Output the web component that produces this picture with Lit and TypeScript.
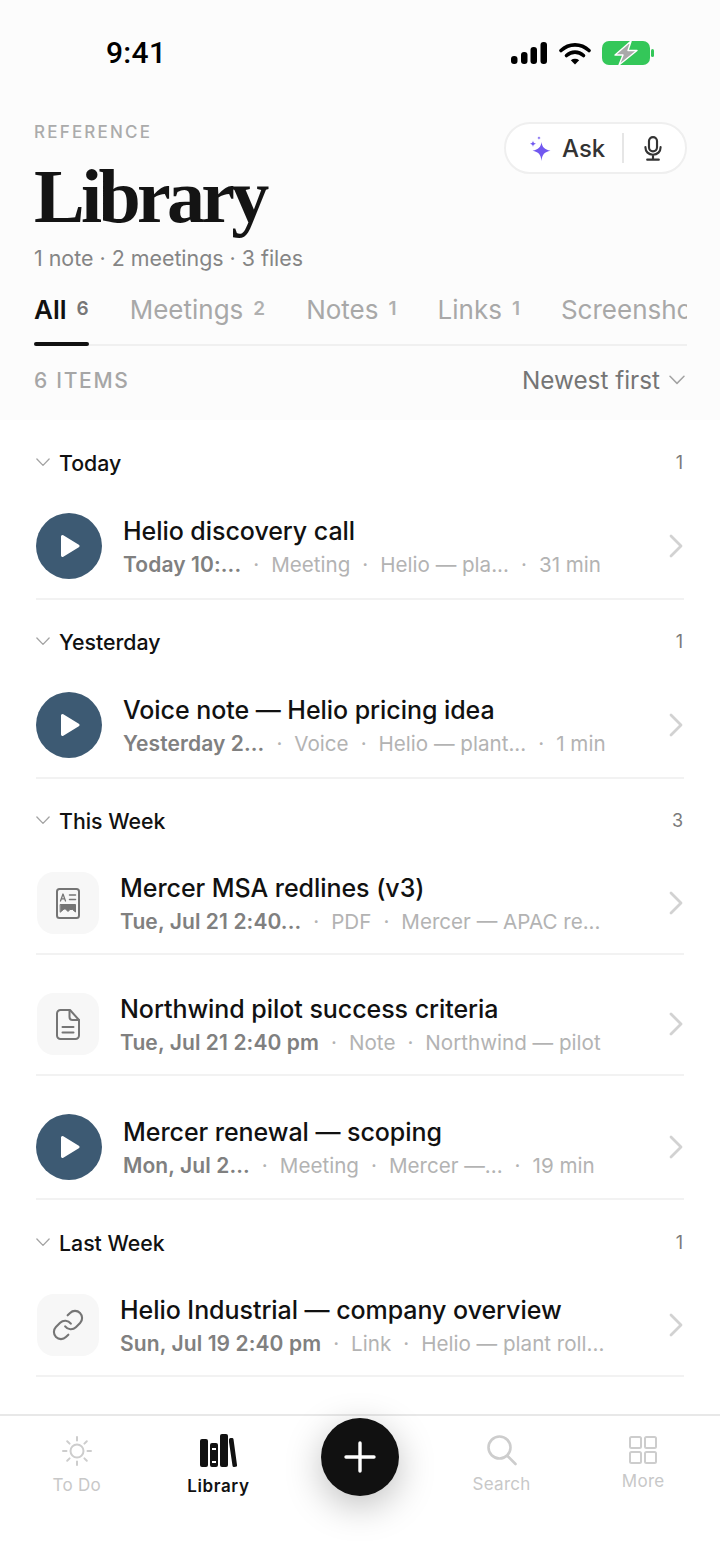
import { LitElement, html, css, svg } from "lit";
import { customElement } from "lit/decorators.js";

type Kind = "play" | "pdf" | "note" | "link";
interface Row { kind: Kind; title: string; date: string; meta: string[]; }
interface Group { name: string; count: number; rows: Row[]; tall?: boolean; }

const groups: Group[] = [
  { name: "Today", count: 1, tall: true, rows: [
    { kind: "play", title: "Helio discovery call", date: "Today 10:...", meta: ["Meeting", "Helio — pla...", "31 min"] },
  ]},
  { name: "Yesterday", count: 1, rows: [
    { kind: "play", title: "Voice note — Helio pricing idea", date: "Yesterday 2...", meta: ["Voice", "Helio — plant...", "1 min"] },
  ]},
  { name: "This Week", count: 3, rows: [
    { kind: "pdf", title: "Mercer MSA redlines (v3)", date: "Tue, Jul 21 2:40...", meta: ["PDF", "Mercer — APAC re..."] },
    { kind: "note", title: "Northwind pilot success criteria", date: "Tue, Jul 21 2:40 pm", meta: ["Note", "Northwind — pilot"] },
    { kind: "play", title: "Mercer renewal — scoping", date: "Mon, Jul 2...", meta: ["Meeting", "Mercer —...", "19 min"] },
  ]},
  { name: "Last Week", count: 1, tall: true, rows: [
    { kind: "link", title: "Helio Industrial — company overview", date: "Sun, Jul 19 2:40 pm", meta: ["Link", "Helio — plant roll..."] },
  ]},
];

const tabs = [["All", "6"], ["Meetings", "2"], ["Notes", "1"], ["Links", "1"], ["Screenshots", "1"]];

const chevDown = (w: number) => html`<svg width=${w} height=${w * 0.6} viewBox="0 0 16 9.6" fill="none" stroke="#a3a3a3" stroke-width="1.5" stroke-linecap="round" stroke-linejoin="round"><path d="M1 1.2 8 8.4l7-7.2"/></svg>`;

const fileIcon = (kind: Kind) => {
  if (kind === "pdf") {
    return html`<svg width="24" height="31" viewBox="0 0 24 31" fill="none" stroke="#757575" stroke-width="2" stroke-linecap="round" stroke-linejoin="round">${svg`<rect x="1" y="1" width="22" height="29" rx="2.500"/><path d="M13.500 7h6M13.500 11.500h6" stroke-width="1.500"/><path d="M4.500 13 7 6l2.500 7M5.500 10.800h3" stroke-width="1.300"/><path d="M4.500 16.500h15V24l-3-2.500h-2.500l-2 2-2.500-2.500H8L4.500 24z" fill="#757575" stroke-width="1"/>`}</svg>`;
  }
  if (kind === "note") {
    return html`<svg width="24" height="31" viewBox="0 0 24 31" fill="none" stroke="#757575" stroke-width="2" stroke-linecap="round" stroke-linejoin="round">${svg`<path d="M4.500 1h9.500L23 11v15.500a3.500 3.500 0 0 1-3.500 3.500h-15A3.500 3.500 0 0 1 1 26.500v-22A3.500 3.500 0 0 1 4.500 1z"/><path d="M13.500 1.200V8a3 3 0 0 0 3 3H23"/><path d="M6.500 18h11M6.500 23.500h11"/>`}</svg>`;
  }
  return html`<svg width="34" height="34" viewBox="0 0 24 24" fill="none" stroke="#757575" stroke-width="1.500" stroke-linecap="round" stroke-linejoin="round">${svg`<path d="M10 13a5 5 0 0 0 7.540.540l3-3a5 5 0 0 0-7.070-7.070l-1.720 1.710"/><path d="M14 11a5 5 0 0 0-7.540-.540l-3 3a5 5 0 0 0 7.070 7.070l1.710-1.710"/>`}</svg>`;
};

@customElement("app-root")
export class AppRoot extends LitElement {
  static styles = css`
    :host { display: block; width: 720px; height: 1564px; position: relative; overflow: hidden; background: #fff;
      font-family: Inter, "Liberation Sans", sans-serif; color: #111; }
    .page { height: 1564px; display: flex; flex-direction: column; }
    .top { background: #fcfcfc; height: 420px; flex: none; display: flex; flex-direction: column; }
    .status { height: 122px; flex: none; display: flex; justify-content: space-between; padding: 36px 66px 0 106px; box-sizing: border-box; }
    .time { font-size: 30px; line-height: 34px; font-weight: 500; color: #000; font-family: Roboto, Inter, sans-serif; letter-spacing: .3px; }
    .sys { display: flex; align-items: center; height: 34px; gap: 12px; }
    .head { display: flex; justify-content: space-between; padding: 0 33px 0 34px; }
    .eyebrow { font-size: 17px; line-height: 20px; letter-spacing: 2.200px; color: #ababab; font-weight: 500; }
    h1 { margin: 11px 0 0; font-family: "Liberation Serif", serif; font-size: 76px; line-height: 86px; font-weight: 700; letter-spacing: -3.700px; color: #141414; }
    .sub { font-size: 21.400px; line-height: 26px; color: #858585; margin-top: 6px; }
    .pill { width: 183px; height: 52px; box-sizing: border-box; border: 2px solid #efefef; border-radius: 26px; background: #fff; display: flex; align-items: center; padding-left: 23px; }
    .ask { font-size: 24px; font-weight: 500; color: #333; margin-left: 11px; }
    .pdiv { width: 2px; height: 30px; background: #e6e6e6; margin: 0 20px 0 17px; }
    .tabs { margin: 19px 33px 0 34px; height: 56px; display: flex; gap: 41px; overflow: hidden; box-shadow: inset 0 -2px 0 #f0f0f0; flex: none; }
    .tab { flex: none; display: flex; gap: 10px; height: 56px; box-sizing: border-box; padding-top: 4px; font-size: 26px; line-height: 32px; color: #a8a8a8; font-weight: 400; position: relative; }
    .tab b { font-size: 19px; font-weight: 600; color: #b0b0b0; line-height: 30px; }
    .tab.on { color: #111; font-weight: 600; }
    .tab.on b { color: #777; }
    .tab.on::after { content: ""; position: absolute; left: 0; right: 0; bottom: 0; height: 4px; border-radius: 2px; background: #111; }
    .sort { display: flex; justify-content: space-between; align-items: center; padding: 0 35px 0 34px; margin-top: 17px; height: 34px; }
    .items { font-size: 21px; letter-spacing: 1.700px; color: #a6a6a6; font-weight: 500; }
    .newest { font-size: 24.300px; color: #757575; display: flex; align-items: center; gap: 9px; }
    .list { padding: 0 36px; flex: 1; }
    .ghead { height: 55px; box-sizing: border-box; padding-top: 28px; display: flex; align-items: center; }
    .ghead.tall { height: 56px; padding-top: 29px; }
    .ghead span.n { font-size: 21.300px; font-weight: 530; line-height: 26px; margin-left: 9px; color: #111; height: 26px; flex: 1; }
    .ghead span.c { font-size: 18px; color: #7a7a7a; line-height: 26px; margin-right: 1px; }
    .chev { display: flex; height: 26px; align-items: center; }
    .row { display: flex; align-items: center; border-bottom: 2px solid #f2f2f2; box-sizing: border-box; height: 124px; padding-top: 20px; }
    .ghead + .row { padding-top: 18px; }
    .ghead + .row.file, .row.file { height: 121px; padding-top: 19px; }
    .play { width: 66px; height: 66px; border-radius: 50%; background: #3d5a73; flex: none; display: flex; align-items: center; justify-content: center; margin-right: 21px; }
    .ficon { width: 62px; height: 62px; border-radius: 17px; background: #f7f7f7; flex: none; display: flex; align-items: center; justify-content: center; margin: 0 21px 0 1px; }
    .text { flex: 1; min-width: 0; margin-top: 4px; }
    .title { font-size: 25px; line-height: 32px; font-weight: 530; color: #111; white-space: nowrap; letter-spacing: -.05px; }
    .meta { display: flex; font-size: 20.600px; line-height: 34px; margin-top: 1px; color: #b3b3b3; white-space: nowrap; gap: 12px; }
    .meta strong { font-size: 21px; font-weight: 600; color: #808080; letter-spacing: .1px; }
    .rchev { flex: none; margin-right: 1px; }
    .bar { height: 150px; flex: none; border-top: 2px solid #e8e8e8; box-sizing: border-box; display: grid; grid-template-columns: repeat(5, 1fr); padding: 18px 6px 0; background: #fff; }
    .ti { display: flex; flex-direction: column; align-items: center; color: #c8c8c8; font-size: 17px; line-height: 22px; letter-spacing: .3px; }
    .ti svg { display: block; }
    .ti.on { color: #111; font-weight: 600; letter-spacing: .6px; }
    .lab { margin-top: 7px; }
    .lab.s { margin-top: 6px; }
    .gap { margin-top: 2px; }
    .fab { position: absolute; left: 321px; top: 1418px; width: 78px; height: 78px; border-radius: 50%; background: #111; box-shadow: 0 10px 36px rgba(0,0,0,.25); display: flex; align-items: center; justify-content: center; }
  `;

  private renderRow(r: Row) {
    return html`<div class="row ${r.kind === "play" ? "" : "file"}">
      ${r.kind === "play"
        ? html`<div class="play"><svg width="24" height="26" viewBox="0 0 24 26"><path d="M4 3.500v19a1.500 1.500 0 0 0 2.300 1.300l15.500-9.500a1.500 1.500 0 0 0 0-2.600L6.300 2.200A1.500 1.500 0 0 0 4 3.500z" fill="#fff"/></svg></div>`
        : html`<div class="ficon">${fileIcon(r.kind)}</div>`}
      <div class="text">
        <div class="title">${r.title}</div>
        <div class="meta"><strong>${r.date}</strong>${r.meta.map((m) => html`<span>·</span><span>${m}</span>`)}</div>
      </div>
      <svg class="rchev" width="14" height="24" viewBox="0 0 14 24" fill="none" stroke="#d2d2d2" stroke-width="2.800" stroke-linecap="round" stroke-linejoin="round"><path d="M2 2l10 10L2 22"/></svg>
    </div>`;
  }

  render() {
    return html`<div class="page">
      <div class="top">
        <div class="status">
          <div class="time">9:41</div>
          <div class="sys">
            <svg width="36" height="22" viewBox="0 0 36 22" fill="#000"><rect x="0" y="14" width="6.500" height="8" rx="3"/><rect x="10" y="10" width="6.500" height="12" rx="3"/><rect x="19.500" y="5" width="6.500" height="17" rx="3"/><rect x="29.500" y="0" width="6.500" height="22" rx="3"/></svg>
            <svg width="32" height="23" viewBox="0 0 32 23" fill="none" stroke="#000" stroke-width="3.600" stroke-linecap="round"><path d="M2 8.500C10 1 22 1 30 8.500"/><path d="M7.500 13.500c5-4.500 12-4.500 17 0"/><path d="M16 22.500l-4.200-4.300c2.500-1.800 5.900-1.800 8.400 0z" fill="#000" stroke="none"/></svg>
            <svg width="52" height="26" viewBox="0 0 52 26" style="margin-left:-1px"><rect y="1" width="48" height="24" rx="7" fill="#34c759"/><rect x="49" y="9" width="3" height="8" rx="1.500" fill="#34c759"/><path d="M28.500 1.500 13 15h8l-4 10L35 10.500h-9l3-9z" fill="#a9a9a9" stroke="#fff" stroke-width="1.400" stroke-linejoin="round"/></svg>
          </div>
        </div>
        <div class="head">
          <div>
            <div class="eyebrow">REFERENCE</div>
            <h1>Library</h1>
            <div class="sub">1 note · 2 meetings · 3 files</div>
          </div>
          <div class="pill">
            <svg width="22" height="25" viewBox="0 0 22 25" fill="#7158f0"><path d="M12.500 6c.6 5 3 7.500 9 8.800-6 1.200-8.400 3.700-9 10.200-.6-6.500-3-9-9-10.200 6-1.300 8.400-3.800 9-8.800z"/><path d="M4 4.500c.2 2 1 2.800 3 3.200-2 .4-2.800 1.200-3 3.300-.2-2.100-1-2.900-3-3.300 2-.4 2.800-1.200 3-3.200zM10 0c.1 1.200.6 1.700 1.800 1.900C10.600 2.100 10.100 2.600 10 4c-.1-1.400-.6-1.900-1.800-2.100C9.400 1.700 9.900 1.200 10 0z"/></svg>
            <span class="ask">Ask</span>
            <span class="pdiv"></span>
            <svg width="18" height="25" viewBox="0 0 20 28" fill="none" stroke="#333" stroke-width="2.400" stroke-linecap="round"><rect x="5.500" y="1.200" width="9" height="16" rx="4.500"/><path d="M1.500 12.500c0 5 3.500 8.500 8.500 8.500s8.500-3.500 8.500-8.500M10 21v5M3.500 26.500h13"/></svg>
          </div>
        </div>
        <div class="tabs">
          ${tabs.map(([t, c], i) => html`<div class="tab ${i === 0 ? "on" : ""}"><span>${t}</span><b>${c}</b></div>`)}
        </div>
        <div class="sort">
          <span class="items">6 ITEMS</span>
          <span class="newest">Newest first ${chevDown(16)}</span>
        </div>
      </div>
      <div class="list">
        ${groups.map((g) => html`
          <div class="ghead ${g.tall ? "tall" : ""}">
            <span class="chev">${chevDown(14)}</span>
            <span class="n">${g.name}</span>
            <span class="c">${g.count}</span>
          </div>
          ${g.rows.map((r) => this.renderRow(r))}
        `)}
      </div>
      <div class="bar">
        <div class="ti">
          <svg width="34" height="34" viewBox="0 0 34 34" fill="none" stroke="#cdcdcd" stroke-width="2" stroke-linecap="round"><circle cx="17" cy="17" r="6.500"/><path d="M17 3v3.500M17 27.500V31M3 17h3.500M27.500 17H31M7.200 7.200l2.400 2.400M24.400 24.400l2.400 2.400M7.200 26.800l2.400-2.400M24.400 9.600l2.400-2.400"/></svg>
          <span class="lab s">To Do</span>
        </div>
        <div class="ti on">
          <svg width="38" height="34" viewBox="0 0 38 34" fill="#111"><rect x="1" y="5" width="8" height="28" rx="2"/><path d="M11 11a2 2 0 0 1 2-2h4a2 2 0 0 1 2 2v20a2 2 0 0 1-2 2h-4a2 2 0 0 1-2-2zM13 14v2h4v-2zM13 27v2h4v-2z" fill-rule="evenodd"/><rect x="21" y="0" width="8" height="33" rx="2"/><path d="M30 5.500a1.500 1.500 0 0 1 1.500-1.500H33a1.500 1.500 0 0 1 1.500 1.300L38 31a1.500 1.500 0 0 1-1.300 1.800l-1.500.2a1.500 1.500 0 0 1-1.700-1.300L30 8z"/></svg>
          <span class="lab">Library</span>
        </div>
        <div></div>
        <div class="ti">
          <svg width="32" height="33" viewBox="0 0 32 33" fill="none" stroke="#cdcdcd" stroke-width="2.600" stroke-linecap="round"><circle cx="13.500" cy="13.500" r="11"/><path d="M21.500 22l8 8"/></svg>
          <span class="lab s">Search</span>
        </div>
        <div class="ti">
          <svg class="gap" width="28" height="28" viewBox="0 0 28 28" fill="none" stroke="#cdcdcd" stroke-width="2"><rect x="1" y="1" width="11" height="11" rx="1.500"/><rect x="16" y="1" width="11" height="11" rx="1.500"/><rect x="1" y="16" width="11" height="11" rx="1.500"/><rect x="16" y="16" width="11" height="11" rx="1.500"/></svg>
          <span class="lab s">More</span>
        </div>
      </div>
      <div class="fab"><svg width="32" height="32" viewBox="0 0 32 32" stroke="#fff" stroke-width="3.400" stroke-linecap="round"><path d="M16 2v28M2 16h28"/></svg></div>
    </div>`;
  }
}
